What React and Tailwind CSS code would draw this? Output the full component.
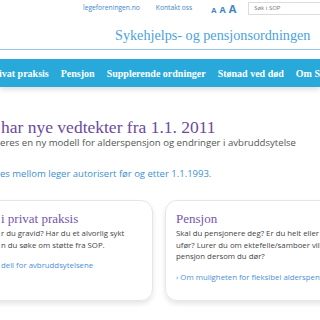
export default function App() {
  const sans = { fontFamily: '"Open Sans", "DejaVu Sans", sans-serif' };
  const serif = { fontFamily: '"Liberation Serif", "DejaVu Serif", serif' };
  return (
    <div className="w-[320px] h-[320px] overflow-hidden bg-white relative">
      {/* top utility bar */}
      <div className="h-[17px] flex items-center pl-[83px] whitespace-nowrap" style={sans}>
        <span className="text-[6.7px] text-[#3e86c6]">legeforeningen.no</span>
        <span className="text-[6.7px] text-[#3e86c6] ml-[16px]">Kontakt oss</span>
        <span className="ml-[19px] flex items-end gap-[3px] text-[#3e86c6] font-bold leading-none">
          <span className="text-[7.5px]">A</span>
          <span className="text-[9px]">A</span>
          <span className="text-[11px]">A</span>
        </span>
        <div className="ml-[12px] h-[13px] flex-1 border border-[#dcdcdc] border-r-0 flex items-center pl-[5px] text-[6px] text-[#777]">
          Søk i SOP
        </div>
      </div>
      {/* title */}
      <div className="h-[32px] pt-[10px] pl-[115px] whitespace-nowrap text-[14.2px] leading-[17px] text-[#4da2dc]" style={serif}>
        Sykehjelps- og pensjonsordningen
      </div>
      <div className="h-[1px] bg-[#8fc9ec]" />
      <div className="h-[9px]" />
      {/* nav */}
      <div className="h-[28px] bg-[#28a9da] flex items-center whitespace-nowrap text-white text-[10px] font-bold shadow-[0_3px_5px_rgba(0,0,0,0.12)]" style={serif}>
        <span className="-ml-[1px]">ivat praksis</span>
        <span className="ml-[12px]">Pensjon</span>
        <span className="ml-[12px]">Supplerende ordninger</span>
        <span className="ml-[12px]">Stønad ved død</span>
        <span className="ml-[12px]">Om SOP</span>
      </div>
      {/* intro */}
      <div className="pt-[30px] whitespace-nowrap">
        <div className="text-[17.5px] leading-[20px] text-[#6b4a9d] pl-[1px]" style={serif}>har nye vedtekter fra 1.1. 2011</div>
        <div className="mt-[0px] text-[9.6px] leading-[12px] text-[#555]" style={sans}>eres en ny modell for alderspensjon og endringer i avbruddsytelse</div>
        <div className="mt-[18px] text-[9.5px] leading-[13px] text-[#3b8fd4]" style={sans}>es mellom leger autorisert før og etter 1.1.1993.</div>
      </div>
      {/* cards */}
      <div className="mt-[20px] flex gap-[12px] -ml-[20px]">
        <div className="w-[173px] h-[101px] shrink-0 rounded-[12px] border border-[#e6e6e6] shadow-[0_3px_5px_rgba(0,0,0,0.1)] pl-[20px] pt-[10px] whitespace-nowrap">
          <div className="text-[13px] leading-[16px] text-[#7656a8]" style={serif}>i privat praksis</div>
          <div className="mt-[1px] text-[7.8px] leading-[11.5px] text-[#444]" style={sans}>
            <div>r du gravid? Har du et alvorlig sykt</div>
            <div>n du søke om støtte fra SOP.</div>
          </div>
          <div className="mt-[9px] text-[7.8px] leading-[11px] text-[#4a8fd6]" style={sans}>dell for avbruddsytelsene</div>
        </div>
        <div className="w-[200px] h-[101px] shrink-0 rounded-[12px] border border-[#e6e6e6] shadow-[0_3px_5px_rgba(0,0,0,0.1)] pl-[10px] pt-[10px] whitespace-nowrap">
          <div className="text-[13px] leading-[16px] text-[#7656a8]" style={serif}>Pensjon</div>
          <div className="mt-[1px] text-[7.8px] leading-[11.5px] text-[#444]" style={sans}>
            <div>Skal du pensjonere deg? Er du helt eller</div>
            <div>ufør? Lurer du om ektefelle/samboer vil få</div>
            <div>pensjon dersom du dør?</div>
          </div>
          <div className="mt-[9px] text-[7.8px] leading-[11px] text-[#4a8fd6]" style={sans}>› Om muligheten for fleksibel alderspensjon</div>
        </div>
      </div>
    </div>
  );
}
